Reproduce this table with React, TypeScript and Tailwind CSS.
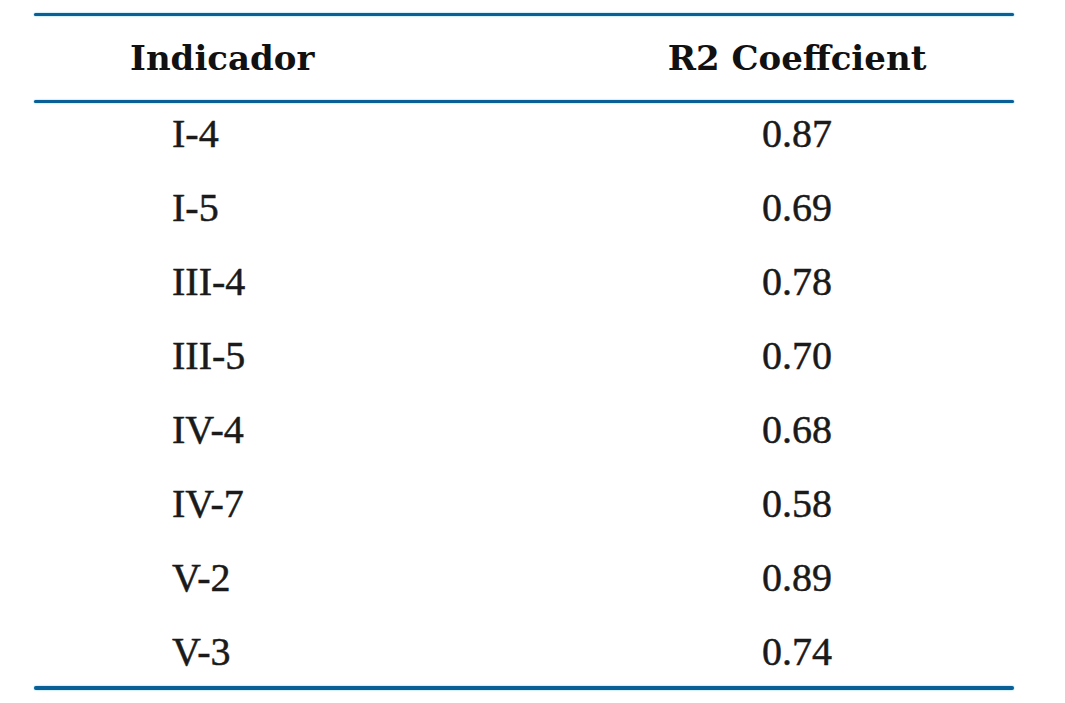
const rows = [
  { id: "I-4", r2: "0.87" },
  { id: "I-5", r2: "0.69" },
  { id: "III-4", r2: "0.78" },
  { id: "III-5", r2: "0.70" },
  { id: "IV-4", r2: "0.68" },
  { id: "IV-7", r2: "0.58" },
  { id: "V-2", r2: "0.89" },
  { id: "V-3", r2: "0.74" },
];

const Rule = ({ thick }: { thick?: boolean }) => (
  <div
    className={
      (thick ? "h-[4px]" : "h-[3px]") +
      " w-full rounded-full bg-[#0a5f96] shadow-[0_0_1.5px_#2fb4ea]"
    }
  />
);

export default function App() {
  return (
    <div className="w-[1065px] h-[703px] bg-white pt-[13px] pl-[34px]">
      <div className="w-[980px] flex flex-col">
        <Rule />

        {/* Header */}
        <div className="flex h-[84px] items-center font-['DejaVu_Serif',serif] font-bold text-[34px] leading-[84px] text-[#111]">
          <div className="w-[546px] pl-[96px]">Indicador</div>
          <div className="flex-1 text-center">R2 Coeffcient</div>
        </div>

        <Rule />

        {/* Body */}
        <div className="flex flex-col gap-[34px] pt-[11px] pb-[14px] font-['Liberation_Serif',serif] text-[40px] leading-[40px] text-[#1a1a1a] [-webkit-text-stroke:0.5px_#1a1a1a]">
          {rows.map((row) => (
            <div key={row.id} className="flex h-[40px]">
              <div className="w-[546px] pl-[138px]">{row.id}</div>
              <div className="flex-1 text-center">{row.r2}</div>
            </div>
          ))}
        </div>

        <Rule thick />
      </div>
    </div>
  );
}
